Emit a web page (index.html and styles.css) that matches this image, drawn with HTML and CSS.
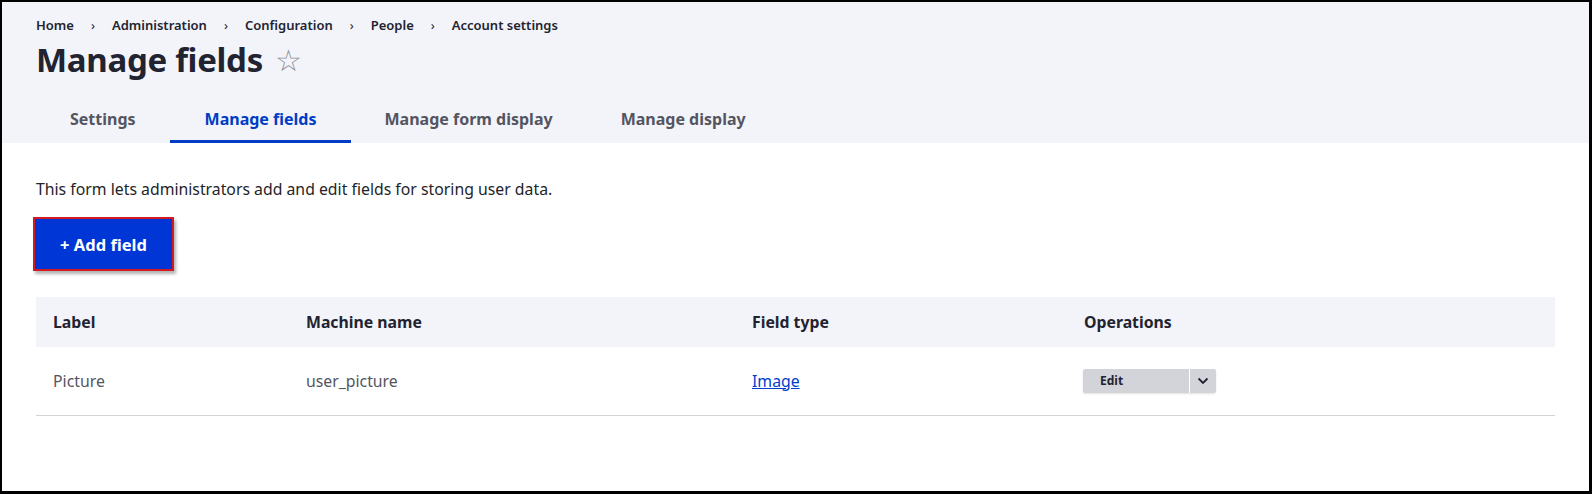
FILE: index.html
```html
<!DOCTYPE html>
<html lang="en">
<head>
<meta charset="utf-8">
<title>Manage fields</title>
<link rel="stylesheet" href="styles.css">
</head>
<body>
<div class="frame">
  <header class="page-header">
    <nav class="breadcrumb">
      <a href="#">Home</a><span class="sep">›</span>
      <a href="#">Administration</a><span class="sep">›</span>
      <a href="#">Configuration</a><span class="sep">›</span>
      <a href="#">People</a><span class="sep">›</span>
      <a href="#">Account settings</a>
    </nav>
    <div class="title-row">
      <h1 class="title">Manage fields</h1>
      <span class="star">☆</span>
    </div>
    <ul class="tabs">
      <li class="tab">Settings</li>
      <li class="tab active">Manage fields</li>
      <li class="tab">Manage form display</li>
      <li class="tab">Manage display</li>
    </ul>
  </header>
  <main class="content">
    <p class="intro">This form lets administrators add and edit fields for storing user data.</p>
    <div class="actions">
      <a class="btn-primary" href="#">+ Add field</a>
    </div>
    <table class="fields">
      <thead>
        <tr>
          <th class="c1">Label</th>
          <th class="c2">Machine name</th>
          <th class="c3">Field type</th>
          <th class="c4">Operations</th>
        </tr>
      </thead>
      <tbody>
        <tr>
          <td>Picture</td>
          <td>user_picture</td>
          <td><a class="link" href="#">Image</a></td>
          <td>
            <div class="dropbutton">
              <span class="drop-main">Edit</span>
              <span class="drop-toggle"><svg width="12" height="8" viewBox="0 0 12 8"><path d="M1.5 1.5 L6 6 L10.5 1.5" fill="none" stroke="#222330" stroke-width="1.8"/></svg></span>
            </div>
          </td>
        </tr>
      </tbody>
    </table>
  </main>
</div>
</body>
</html>
```

FILE: styles.css
```css
* { box-sizing: border-box; }
html, body { margin: 0; padding: 0; }
body {
  font-family: "Noto Sans", "Open Sans", sans-serif;
  color: #232429;
  background: #fff;
}
.frame {
  width: 1592px;
  height: 494px;
  border-style: solid;
  border-color: #000;
  border-width: 2px 3px 3px 2px;
  overflow: hidden;
}
.page-header {
  background: #f3f4f9;
  padding: 14px 0 0 34px;
  height: 141px;
}
.breadcrumb {
  font-size: 13px;
  font-weight: 600;
  line-height: 18px;
  display: flex;
  align-items: center;
}
.breadcrumb a { color: #222330; text-decoration: none; }
.breadcrumb .sep {
  width: 38px;
  text-align: center;
  font-weight: 400;
  color: #222330;
}
.title-row {
  display: flex;
  align-items: center;
  margin-top: 4px;
  height: 44px;
}
.title {
  margin: 0;
  font-size: 33px;
  font-weight: 700;
  color: #222330;
  line-height: 44px;
  letter-spacing: -0.3px;
}
.star {
  font-size: 30px;
  color: #8e929c;
  margin-left: 12px;
  line-height: 44px;
}
.tabs {
  list-style: none;
  margin: 13px 0 0 0;
  padding: 0;
  display: flex;
  height: 48px;
}
.tab {
  padding: 4px 34px 0 34px;
  font-size: 16px;
  font-weight: 700;
  color: #545560;
  line-height: 41px;
  border-bottom: 3px solid transparent;
}
.tab.active {
  color: #003cc5;
  border-bottom-color: #003cc5;
  padding-left: 35px;
}
.content {
  padding: 0 34px;
}
.intro {
  margin: 35px 0 0 0;
  font-size: 15.8px;
  line-height: 22px;
  color: #232429;
}
.actions {
  margin-top: 17px;
}
.btn-primary {
  display: inline-flex;
  align-items: center;
  justify-content: center;
  margin-left: -3px;
  width: 141px;
  height: 54px;
  background: #0036d6;
  border: 2px solid #d21a1f;
  color: #fff;
  font-size: 16.5px;
  font-weight: 700;
  text-decoration: none;
  box-shadow: 2px 3px 3px rgba(0,0,0,0.3);
}
.fields {
  margin-top: 26px;
  width: 1519px;
  border-collapse: collapse;
  font-size: 15.8px;
}
.fields th {
  background: #f3f4f9;
  text-align: left;
  font-weight: 700;
  color: #222330;
  height: 50px;
  padding: 0 17px;
}
.fields td {
  height: 68px;
  padding: 0 17px;
  border-bottom: 1px solid #d3d4d9;
  color: #545560;
}
.c1 { width: 253px; }
.c2 { width: 446px; }
.c3 { width: 332px; }
.link { color: #003ecc; text-decoration: underline; }
.dropbutton {
  display: inline-flex;
  height: 24px;
  margin-left: -1px;
  border-radius: 2px;
  overflow: hidden;
  box-shadow: 0 1px 2px rgba(0,0,0,0.12);
}
.drop-main {
  width: 106px;
  background: #d3d4d9;
  font-size: 12px;
  font-weight: 700;
  color: #222330;
  padding-left: 17px;
  line-height: 24px;
}
.drop-toggle {
  width: 26px;
  margin-left: 1px;
  background: #d3d4d9;
  display: flex;
  align-items: center;
  justify-content: center;
}
```
